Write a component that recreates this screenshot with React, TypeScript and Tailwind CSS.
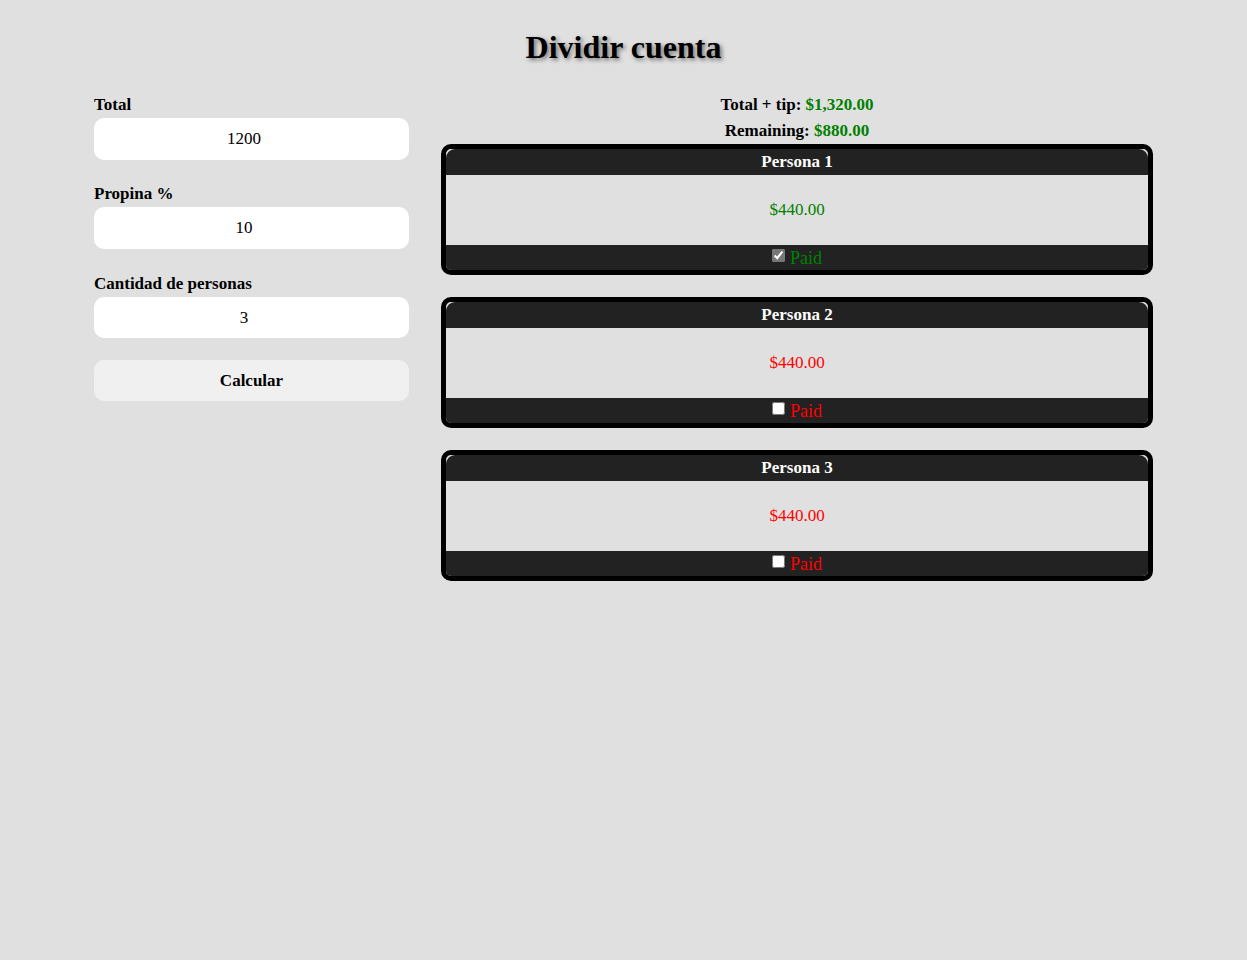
import { useState } from "react";

const fmt = (n: number) =>
  "$" + n.toLocaleString("en-US", { minimumFractionDigits: 2, maximumFractionDigits: 2 });

export default function App() {
  const [total] = useState("1200");
  const [tip] = useState("10");
  const [people] = useState("3");
  const [paid, setPaid] = useState<boolean[]>([true, false, false]);

  const grand = Number(total) * (1 + Number(tip) / 100);
  const share = grand / Number(people);
  const remaining = grand - paid.filter(Boolean).length * share;

  return (
    <div className="min-h-[960px] bg-[#e0e0e0] text-black font-['Liberation_Serif',serif]">
      <h1 className="pt-[29px] text-center text-[32px] font-bold leading-[37px] [text-shadow:2px_2px_4px_rgba(0,0,0,0.5)]">
        Dividir cuenta
      </h1>

      <div className="mx-auto mt-[30px] flex w-[1059px] gap-[32px]">
        {/* Form */}
        <div className="flex w-[315px] flex-col">
          <label className="text-[17px] font-bold leading-[18px]">Total</label>
          <input
            type="number"
            className="mt-[4px] h-[42px] rounded-[10px] bg-white text-center text-[17px] outline-none"
            value={total}
            readOnly
          />
          <label className="mt-[25px] text-[17px] font-bold leading-[18px]">Propina %</label>
          <input
            type="number"
            className="mt-[4px] h-[42px] rounded-[10px] bg-white text-center text-[17px] outline-none"
            value={tip}
            readOnly
          />
          <label className="mt-[26px] text-[17px] font-bold leading-[18px]">Cantidad de personas</label>
          <input
            type="number"
            className="mt-[4px] h-[41px] rounded-[10px] bg-white text-center text-[17px] outline-none"
            value={people}
            readOnly
          />
          <button className="mt-[22px] h-[41px] rounded-[10px] bg-[#f0f0f0] text-[17px] font-bold">
            Calcular
          </button>
        </div>

        {/* Results */}
        <div className="flex flex-1 flex-col">
          <p className="mt-[-4px] text-center text-[17px] font-bold leading-[26px]">
            Total + tip: <span className="text-[#008000]">{fmt(grand)}</span>
          </p>
          <p className="text-center text-[17px] font-bold leading-[26px]">
            Remaining: <span className="text-[#008000]">{fmt(remaining)}</span>
          </p>

          <div className="flex flex-col gap-[22px]">
            {paid.map((isPaid, i) => (
              <div
                key={i}
                className="overflow-hidden rounded-[10px] border-[5px] border-black bg-[#e0e0e0]"
              >
                <div className="h-[26px] rounded-t-[9px] bg-[#222222] text-center text-[17px] font-bold leading-[26px] text-white">
                  Persona {i + 1}
                </div>
                <div
                  className={
                    "flex h-[70px] items-center justify-center text-[17px] " +
                    (isPaid ? "text-[#008000]" : "text-[#ff0000]")
                  }
                >
                  {fmt(share)}
                </div>
                <div className="flex h-[25px] items-center justify-center gap-[5px] bg-[#222222]">
                  <input
                    type="checkbox"
                    checked={isPaid}
                    onChange={() =>
                      setPaid((p) => p.map((v, j) => (j === i ? !v : v)))
                    }
                    className={"m-0 mb-[4px] h-[13px] w-[13px] " + (isPaid ? "accent-[#777777]" : "")}
                  />
                  <span
                    className={
                      "mt-[1px] text-[18px] leading-[22px] " +
                      (isPaid ? "text-[#008000]" : "text-[#ff0000]")
                    }
                  >
                    Paid
                  </span>
                </div>
              </div>
            ))}
          </div>
        </div>
      </div>
    </div>
  );
}
